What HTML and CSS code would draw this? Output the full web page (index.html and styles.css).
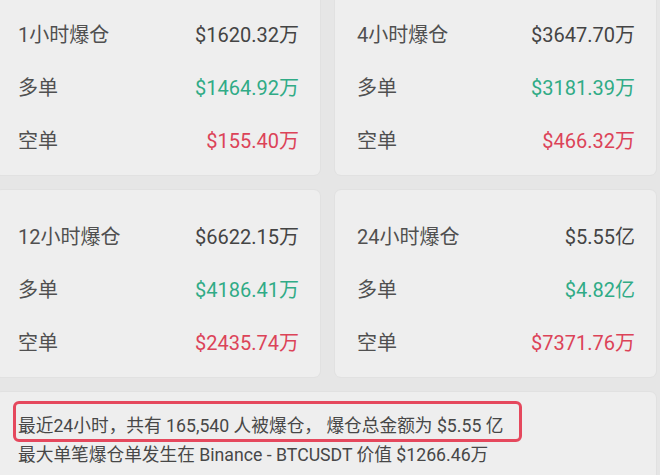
FILE: index.html
```html
<!DOCTYPE html>
<html lang="zh-CN">
<head>
  <meta charset="UTF-8">
  <meta name="viewport" content="width=device-width, initial-scale=1.0">
  <title>爆仓统计</title>
  <link rel="stylesheet" href="styles.css">
</head>
<body>
  <div class="page">
    <div class="grid">
      <div class="card">
        <div class="row"><span class="label">1小时爆仓</span><span class="value">$1620.32万</span></div>
        <div class="row"><span class="label">多单</span><span class="value long">$1464.92万</span></div>
        <div class="row"><span class="label">空单</span><span class="value short">$155.40万</span></div>
      </div>
      <div class="card">
        <div class="row"><span class="label">4小时爆仓</span><span class="value">$3647.70万</span></div>
        <div class="row"><span class="label">多单</span><span class="value long">$3181.39万</span></div>
        <div class="row"><span class="label">空单</span><span class="value short">$466.32万</span></div>
      </div>
      <div class="card">
        <div class="row"><span class="label">12小时爆仓</span><span class="value">$6622.15万</span></div>
        <div class="row"><span class="label">多单</span><span class="value long">$4186.41万</span></div>
        <div class="row"><span class="label">空单</span><span class="value short">$2435.74万</span></div>
      </div>
      <div class="card">
        <div class="row"><span class="label">24小时爆仓</span><span class="value">$5.55亿</span></div>
        <div class="row"><span class="label">多单</span><span class="value long">$4.82亿</span></div>
        <div class="row"><span class="label">空单</span><span class="value short">$7371.76万</span></div>
      </div>
    </div>

    <div class="summary">
      <p class="highlight">最近24小时，共有 165,540 人被爆仓， 爆仓总金额为 $5.55 亿</p>
      <p class="line">最大单笔爆仓单发生在 Binance - BTCUSDT 价值 $1266.46万</p>
    </div>
  </div>
</body>
</html>
```

FILE: styles.css
```css
body {
  margin: 0;
  background-color: #e6e6e6;
  font-family: Roboto, "Noto Sans CJK SC", sans-serif;
  overflow: hidden;
}
.page {
  width: 660px;
  margin: -12px 0 0 -4px;
}
.grid {
  display: grid;
  grid-template-columns: 324px 321px;
  gap: 15px;
}
.card {
  background: #eeeeee;
  border-radius: 6px;
  box-shadow: 0 0 0 1px #e1e1e1;
  padding: 19px 21px 9px 22px;
}
.row {
  height: 53px;
  display: flex;
  justify-content: space-between;
  align-items: center;
  font-size: 20px;
}
.label {
  color: #505050;
}
.value {
  color: #444444;
}
.value.long {
  color: #30ab86;
}
.value.short {
  color: #dc4358;
}
.summary {
  margin-top: 15px;
  width: 660px;
  background: #eeeeee;
  border-radius: 6px 6px 0 0;
  box-shadow: 0 0 0 1px #e1e1e1;
  padding: 9px 22px 20px 22px;
  box-sizing: border-box;
}
.summary p {
  margin: 0;
  font-size: 17.7px;
  line-height: 27px;
  color: #474747;
  white-space: nowrap;
}
.highlight {
  width: 509px;
  box-sizing: border-box;
  margin-left: -5px !important;
  padding: 9px 0 0 2px;
  height: 41px;
  line-height: 26px !important;
  border: 3px solid #e5485d;
  border-radius: 6px;
}
```
